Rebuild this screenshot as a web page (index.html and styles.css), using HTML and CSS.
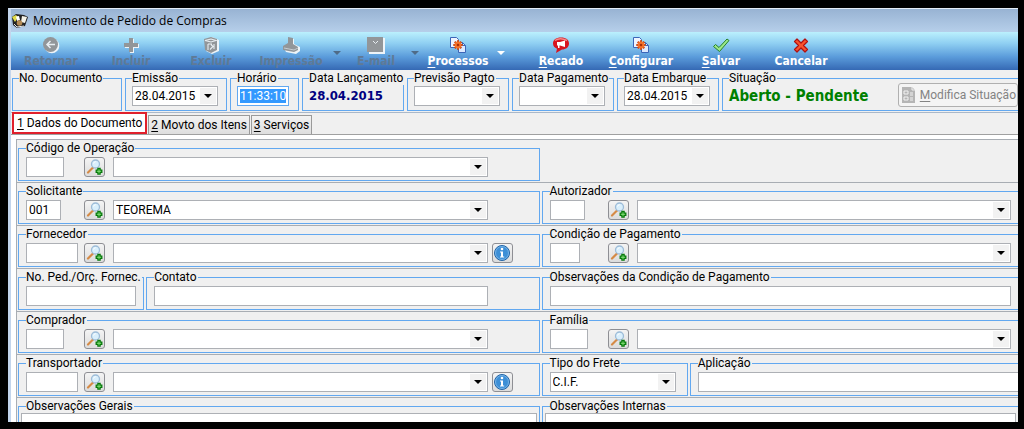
FILE: index.html
```
<!DOCTYPE html>
<html lang="pt-BR">
<head>
<meta charset="utf-8">
<title>Movimento de Pedido de Compras</title>
<link rel="stylesheet" href="styles.css">
</head>
<body>
<svg class="defs" aria-hidden="true">
  <symbol id="search" viewBox="0 0 18 18">
    <path d="M3 14.500 8 9.500" stroke="#d58a45" stroke-width="2.200" stroke-linecap="round"/>
    <circle cx="10.500" cy="6" r="4" fill="#d9effc" stroke="#9dbcd8" stroke-width="1.300"/>
    <path d="M8.500 5.500q.5-1.700 2.200-1.800" stroke="#fff" fill="none"/>
    <path d="M12.900 10.500h2.200v1.700h1.700v2.200h-1.700v1.700h-2.200v-1.700h-1.700v-2.200h1.700z" fill="#8be57c" stroke="#067a0b" stroke-width="1.300"/>
  </symbol>
  <symbol id="info" viewBox="0 0 18 18">
    <circle cx="9" cy="9" r="7.500" fill="#3d8fd6" stroke="#2465a5"/>
    <circle cx="9" cy="9" r="6.500" fill="none" stroke="#85bdec" stroke-width=".8"/>
    <circle cx="9" cy="5" r="1.300" fill="#fff"/>
    <path d="M7 7.500h3v5h1.200v1H7v-1h1v-4H7z" fill="#fff"/>
  </symbol>
  <symbol id="process" viewBox="0 0 18 18">
    <path d="M1.500 1.500h6l2 2v8h-8z" fill="#eef4ff" stroke="#3c66b8"/>
    <path d="M9.500 6.500h4l3 3v7h-7z" fill="#dce9ff" stroke="#3c66b8"/>
    <path d="M13.500 6.500v3h3" fill="none" stroke="#3c66b8"/>
    <path d="M9 4.300v9.400M4.300 9h9.400M5.700 5.700l6.600 6.600M12.300 5.700l-6.600 6.600" stroke="#c9440e" stroke-width="2"/>
    <circle cx="9" cy="9" r="3.400" fill="#f4722b"/>
    <circle cx="9" cy="9" r="1.300" fill="#a8300a"/>
  </symbol>
</svg>

<main class="window">
  <header class="titlebar">
    <svg class="app-icon" viewBox="0 0 18 16" aria-hidden="true">
      <path d="M1 4 5 1l8 1 4 2-3 9-8 2-4-3z" fill="#222"/>
      <path d="M1 4 5 2l2 2-3 5z" fill="#e0dc4a"/>
      <path d="M11 3l5 1-2 6-4-1z" fill="#f5f3e8"/>
      <path d="M5 3.500 8 3l1 4-3 1z" fill="#fff"/>
      <circle cx="8.500" cy="10" r="2.800" fill="#b58b55"/>
      <path d="M3 11l3 3 7-1" fill="none" stroke="#e8e8e8"/>
    </svg>
    <h1>Movimento de Pedido de Compras</h1>
  </header>

  <nav class="toolbar" aria-label="Ações">
    <button class="tool" disabled>
      <svg viewBox="0 0 18 18"><circle cx="9.800" cy="9.800" r="7.500" fill="#eef4f8"/><circle cx="8.500" cy="8.500" r="7.500" fill="#929699"/><path d="M13 8.500H5m3.500-3.500L5 8.500 8.500 12" fill="none" stroke="#e8eef2" stroke-width="1.500"/></svg>
      <span>Retornar</span></button>
    <button class="tool" disabled>
      <svg viewBox="0 0 18 18"><path d="M8 3h4v5h5v4h-5v5H8v-5H3V8h5z" fill="#eef4f8"/><path d="M7 2h4v5h5v4h-5v5H7v-5H2V7h5z" fill="#929699"/></svg>
      <span>Incluir</span></button>
    <button class="tool" disabled>
      <svg viewBox="0 0 18 18"><path d="M3 4l7-3 7 3v11l-7 3-6-3z" fill="#eef4f8"/><path d="M2 3l7-2 6 2v11l-6 3-6-3z" fill="#929699"/><path d="M3 4.500 9 3l5 1.500L9 6zM6 8h4M6 8v6M9 8.500l2 2-3 3M12 8v5" fill="none" stroke="#e8eef2" stroke-width="1.100"/></svg>
      <span>Excluir</span></button>
    <button class="tool" disabled>
      <svg viewBox="0 0 18 18"><path d="M7 2l5 1v5l6 3v4l-4 3-10-2-2-4 5-3z" fill="#eef4f8"/><path d="M6 1l5 1v6l5 3v3l-4 2-11-2v-4l5-3z" fill="#929699"/><path d="M2 12l10 2 4-2" fill="none" stroke="#c5ccd0"/></svg>
      <span>Impressão</span></button>
    <button class="drop dim" disabled aria-label="Opções de impressão"></button>
    <button class="tool mail" disabled>
      <svg viewBox="0 0 18 18"><path d="M2 2h16v16H2z" fill="#eef4f8"/><path d="M0 1h16v15H0z" fill="#929699"/><path d="M6 5l2.500 2.500L11 5" fill="none" stroke="#e8eef2"/></svg>
      <span>E-mail</span></button>
    <button class="drop dim" disabled aria-label="Opções de e-mail"></button>
    <button class="tool process">
      <svg><use href="#process"/></svg>
      <span><u>P</u>rocessos</span></button>
    <button class="drop" aria-label="Opções de processos"></button>
    <button class="tool apart">
      <svg viewBox="0 0 18 18"><path d="M9 1.500c5 0 8 2.300 8 6s-3 6-7 6l-6 3.500 1-4.200C2.500 11.700 1 10 1 7.500c0-3.700 3-6 8-6z" fill="#d8141e"/><path d="M3 4.500q5-3.500 12 0" stroke="#f58a8a" stroke-width="1.500" fill="none"/><path d="M5 6h3l5-1.500v6.500L8 9.500H7.500V12H6V9.500H5z" fill="#fff"/></svg>
      <span><u>R</u>ecado</span></button>
    <button class="tool">
      <svg><use href="#process"/></svg>
      <span><u>C</u>onfigurar</span></button>
    <button class="tool">
      <svg viewBox="0 0 18 18"><path d="M1.500 10.500 3.500 8.500l3.500 3L15 3l2 1.500L7.500 15.500z" fill="#9be88a" stroke="#27812a" stroke-width="1" stroke-linejoin="round"/></svg>
      <span><u>S</u>alvar</span></button>
    <button class="tool">
      <svg viewBox="0 0 18 18"><path d="M5 3l4 4 4-4 2.500 2.500-4 4 4 4L13 16l-4-4-4 4-2.500-2.500 4-4-4-4z" fill="#f8542d" stroke="#b01010" stroke-width="1.200" stroke-linejoin="round"/></svg>
      <span>Cancelar</span></button>
  </nav>

  <section class="summary">
    <fieldset class="group w-number"><legend>No. Documento</legend></fieldset>
    <fieldset class="group w-date"><legend>Emissão</legend>
      <div class="line"><select class="date" aria-label="Emissão"><option>28.04.2015</option></select></div></fieldset>
    <fieldset class="group w-time"><legend>Horário</legend>
      <div class="line"><input class="time" aria-label="Horário" value="11:33:10"></div></fieldset>
    <fieldset class="group w-date"><legend>Data Lançamento</legend>
      <div class="line"><output class="posted">28.04.2015</output></div></fieldset>
    <fieldset class="group w-date"><legend>Previsão Pagto</legend>
      <div class="line"><select class="date" aria-label="Previsão Pagto"><option></option></select></div></fieldset>
    <fieldset class="group w-date"><legend>Data Pagamento</legend>
      <div class="line"><select class="date" aria-label="Data Pagamento"><option></option></select></div></fieldset>
    <fieldset class="group w-date"><legend>Data Embarque</legend>
      <div class="line"><select class="date" aria-label="Data Embarque"><option>28.04.2015</option></select></div></fieldset>
    <fieldset class="group open status"><legend>Situação</legend>
      <div class="line"><output class="state">Aberto - Pendente</output>
        <button class="change" disabled>
          <svg viewBox="0 0 16 18" aria-hidden="true"><path d="M1 1h10l3 3v13H1z" fill="#b5b5b5"/><path d="M11 1v3h3" fill="none" stroke="#eee"/><path d="M3 5h4v3H3zM3 11h4v3H3zM9 7h3M9 9h3M9 12h3M9 14h3" fill="none" stroke="#f3f3f3"/></svg>
          <span><u>M</u>odifica Situação</span></button></div></fieldset>
  </section>

  <div class="tabs" role="tablist">
    <button class="tab active" role="tab" aria-selected="true"><u>1</u> Dados do Documento</button>
    <button class="tab" role="tab" aria-selected="false"><u>2</u> Movto dos Itens</button>
    <button class="tab" role="tab" aria-selected="false"><u>3</u> Serviços</button>
  </div>

  <form class="panel">
    <div class="row">
      <fieldset class="group"><legend>Código de Operação</legend>
        <div class="line"><span class="code"><input class="c-38" aria-label="Código de Operação"></span>
          <button type="button" class="icon" aria-label="Pesquisar operação"><svg><use href="#search"/></svg></button>
          <select class="wide" aria-label="Operação"><option></option></select><span class="extra"></span></div></fieldset>
    </div>
    <div class="row">
      <fieldset class="group"><legend>Solicitante</legend>
        <div class="line"><span class="code"><input class="c-35" aria-label="Código do solicitante" value="001"></span>
          <button type="button" class="icon" aria-label="Pesquisar solicitante"><svg><use href="#search"/></svg></button>
          <select class="wide" aria-label="Solicitante"><option>TEOREMA</option></select><span class="extra"></span></div></fieldset>
      <fieldset class="group open"><legend>Autorizador</legend>
        <div class="line"><span class="code"><input class="c-35" aria-label="Código do autorizador"></span>
          <button type="button" class="icon" aria-label="Pesquisar autorizador"><svg><use href="#search"/></svg></button>
          <select class="wide" aria-label="Autorizador"><option></option></select></div></fieldset>
    </div>
    <div class="row">
      <fieldset class="group"><legend>Fornecedor</legend>
        <div class="line"><span class="code"><input class="c-52" aria-label="Código do fornecedor"></span>
          <button type="button" class="icon" aria-label="Pesquisar fornecedor"><svg><use href="#search"/></svg></button>
          <select class="wide" aria-label="Fornecedor"><option></option></select><span class="extra">
          <button type="button" class="icon" aria-label="Informações do fornecedor"><svg><use href="#info"/></svg></button></span></div></fieldset>
      <fieldset class="group open"><legend>Condição de Pagamento</legend>
        <div class="line"><span class="code"><input class="c-30" aria-label="Código da condição"></span>
          <button type="button" class="icon" aria-label="Pesquisar condição"><svg><use href="#search"/></svg></button>
          <select class="wide" aria-label="Condição de Pagamento"><option></option></select></div></fieldset>
    </div>
    <div class="row">
      <div class="pair order">
        <fieldset class="group"><legend>No. Ped./Orç. Fornec.</legend>
          <div class="line"><input class="wide" aria-label="No. Ped./Orç. Fornec."></div></fieldset>
        <fieldset class="group"><legend>Contato</legend>
          <div class="line"><input class="wide" aria-label="Contato"><span class="extra"></span></div></fieldset>
      </div>
      <fieldset class="group open"><legend>Observações da Condição de Pagamento</legend>
        <div class="line"><input class="wide" aria-label="Observações da Condição de Pagamento"></div></fieldset>
    </div>
    <div class="row">
      <fieldset class="group"><legend>Comprador</legend>
        <div class="line"><span class="code"><input class="c-38" aria-label="Código do comprador"></span>
          <button type="button" class="icon" aria-label="Pesquisar comprador"><svg><use href="#search"/></svg></button>
          <select class="wide" aria-label="Comprador"><option></option></select><span class="extra"></span></div></fieldset>
      <fieldset class="group open"><legend>Família</legend>
        <div class="line"><span class="code"><input class="c-38" aria-label="Código da família"></span>
          <button type="button" class="icon" aria-label="Pesquisar família"><svg><use href="#search"/></svg></button>
          <select class="wide" aria-label="Família"><option></option></select></div></fieldset>
    </div>
    <div class="row">
      <fieldset class="group"><legend>Transportador</legend>
        <div class="line"><span class="code"><input class="c-52" aria-label="Código do transportador"></span>
          <button type="button" class="icon" aria-label="Pesquisar transportador"><svg><use href="#search"/></svg></button>
          <select class="wide" aria-label="Transportador"><option></option></select><span class="extra">
          <button type="button" class="icon" aria-label="Informações do transportador"><svg><use href="#info"/></svg></button></span></div></fieldset>
      <div class="pair freight">
        <fieldset class="group"><legend>Tipo do Frete</legend>
          <div class="line"><select class="freight-type" aria-label="Tipo do Frete"><option>C.I.F.</option></select></div></fieldset>
        <fieldset class="group open bleed"><legend>Aplicação</legend>
          <div class="line"><input class="wide" aria-label="Aplicação"></div></fieldset>
      </div>
    </div>
    <div class="row notes">
      <fieldset class="group"><legend>Observações Gerais</legend><textarea aria-label="Observações Gerais"></textarea></fieldset>
      <fieldset class="group open"><legend>Observações Internas</legend><textarea aria-label="Observações Internas"></textarea></fieldset>
    </div>
  </form>
</main>
</body>
</html>
```
FILE: styles.css
```
* { box-sizing: border-box; }

body {
  display: flex;
  height: 100vh;
  margin: 0;
  padding: 8px 6px 7px 8px;
  background: #000;
  color: #000;
  font: 12px/14px Roboto, "Liberation Sans", sans-serif;
}

button, input, select, textarea { margin: 0; font: inherit; color: inherit; border-radius: 0; }
u { text-underline-offset: 2px; }
.defs { position: absolute; width: 0; height: 0; }

.window {
  display: flex;
  flex: 1;
  flex-direction: column;
  min-width: 0;
  overflow: hidden;
  background: #f0f0f0;
  border-left: 3px solid #c3d5ec;
  border-top: 1px solid #e4edf8;
}

.titlebar {
  display: flex;
  flex: none;
  align-items: center;
  gap: 4px;
  height: 23px;
  background: linear-gradient(#98b3d3, #b6cfea);
}
.titlebar h1 {
  margin: 0;
  font: 12px/16px "Open Sans", "Noto Sans", sans-serif;
}
.app-icon { width: 18px; height: 16px; }

.toolbar {
  display: flex;
  flex: none;
  height: 38px;
  background: linear-gradient(#bbf0fd, #8fcff2 30%, #5b9cdb 65%, #3569b4);
}
.tool {
  display: flex;
  flex: none;
  flex-direction: column;
  align-items: center;
  width: 80px;
  padding: 4px 0 0;
  border: 0;
  background: none;
  color: #fff;
  font: bold 12px/15px "DejaVu Sans Condensed", "Open Sans", sans-serif;
}
.tool svg { width: 18px; height: 18px; }
.tool:disabled { color: #5f7a96; }
.tool.mail { width: 66px; }
.tool.process { width: 74px; }
.tool.apart { margin-left: 14px; }
.drop {
  width: 12px;
  padding: 0;
  border: 0;
  background: none;
  color: #fff;
}
.drop::before {
  content: "";
  display: block;
  width: 0;
  border: 4px solid transparent;
  border-top-color: currentColor;
  border-bottom: 0;
  margin: 4px auto 0;
}
.drop.dim { color: #4f6b88; }

.summary {
  display: flex;
  flex: none;
  gap: 3px;
  padding: 1px 0 1px 1px;
  border-bottom: 1px solid #a9b8ca;
}

.group {
  min-width: 0;
  height: 40px;
  margin: 0;
  padding: 2px 7px 0;
  border: 1px solid #62a8f0;
}
.group.open { border-right: 0; }
.group legend { padding: 0 1px 0 0; white-space: nowrap; }
.line { display: flex; align-items: flex-start; }
.w-number { width: 110px; }
.w-date { width: 102px; }
.w-time { width: 69px; }
.summary .group { padding: 1px 6px 0; }
.summary .status { flex: 1; padding-right: 0; }

input, select, textarea {
  height: 20px;
  padding: 0 2px;
  background: #fff;
  border: 1px solid #adb0b5;
  outline: 0;
}
select {
  appearance: none;
  background: #fff url("data:image/svg+xml,%3Csvg xmlns='http://www.w3.org/2000/svg' width='16' height='16'%3E%3Cpath fill='%23f2f2f2' d='M0 0h16v16H0z'/%3E%3Cpath d='M4 6h8L8 10z'/%3E%3C/svg%3E") no-repeat right 1px center;
}
.date { width: 86px; }
.time {
  width: 52px;
  padding: 2px;
  border-color: #62a8f0;
  background: linear-gradient(#3399ff, #3399ff) content-box, #fff;
  color: #fff;
}
.posted, .state {
  flex: 1;
  font: bold 13px/20px "DejaVu Sans Condensed", "Open Sans", sans-serif;
  color: #000080;
  white-space: nowrap;
}
.state { font-size: 15px; color: #008000; }
.change {
  display: flex;
  flex: none;
  align-items: center;
  gap: 3px;
  height: 24px;
  margin-top: -3px;
  padding: 0 1px 0 2px;
  border: 1px solid #b0b0b0;
  border-radius: 3px;
  background: #f4f4f4;
  color: #838383;
}
.change svg { width: 16px; height: 18px; }

.tabs {
  display: flex;
  flex: none;
  align-items: flex-end;
  gap: 1px;
  height: 22px;
  padding-left: 1px;
  border-bottom: 1px solid #a0a0a0;
}
.tab {
  height: 19px;
  padding: 0 2px;
  border: 1px solid #9a9a9a;
  border-bottom: 0;
  background: linear-gradient(#f3f3f3, #dedede);
}
.tab.active {
  height: 22px;
  padding: 0 3px;
  border: 2px solid #e0202c;
  background: #fff;
}

.panel {
  flex: 1;
  min-height: 0;
  padding: 4px 0 0 5px;
  background: #fff;
}
.row {
  display: grid;
  grid-template-columns: 521fr 476fr;
  gap: 2px;
  padding: 1px 0 1px 1px;
  border-top: 1px solid #a8adb3;
  border-left: 1px solid #a8adb3;
  background: #f0f0f0;
}
.code { width: 58px; }
.code input { display: block; }
.c-30 { width: 30px; }
.c-35 { width: 35px; }
.c-38 { width: 38px; }
.c-52 { width: 52px; }
.wide { flex: 1; min-width: 0; }
.icon {
  flex: none;
  width: 21px;
  height: 20px;
  padding: 0;
  border: 1px solid #8e8f94;
  border-radius: 3px;
  background: linear-gradient(#f4f4f4, #dcdcdc);
}
.icon svg { display: block; width: 18px; height: 18px; }
.code + .icon { margin-right: 8px; }
.extra { width: 44px; padding-left: 4px; }
.pair { display: grid; gap: 2px; min-width: 0; }
.order { grid-template-columns: 126fr 393fr; }
.freight { grid-template-columns: 146fr 328fr; }
.freight-type { width: 126px; }
.group.bleed { padding-right: 0; }
.bleed input { border-right: 0; }
.notes .group { height: 80px; padding: 0 2px; }
.notes legend { margin-left: 5px; }
.notes textarea { display: block; width: 100%; height: 60px; resize: none; }
```
